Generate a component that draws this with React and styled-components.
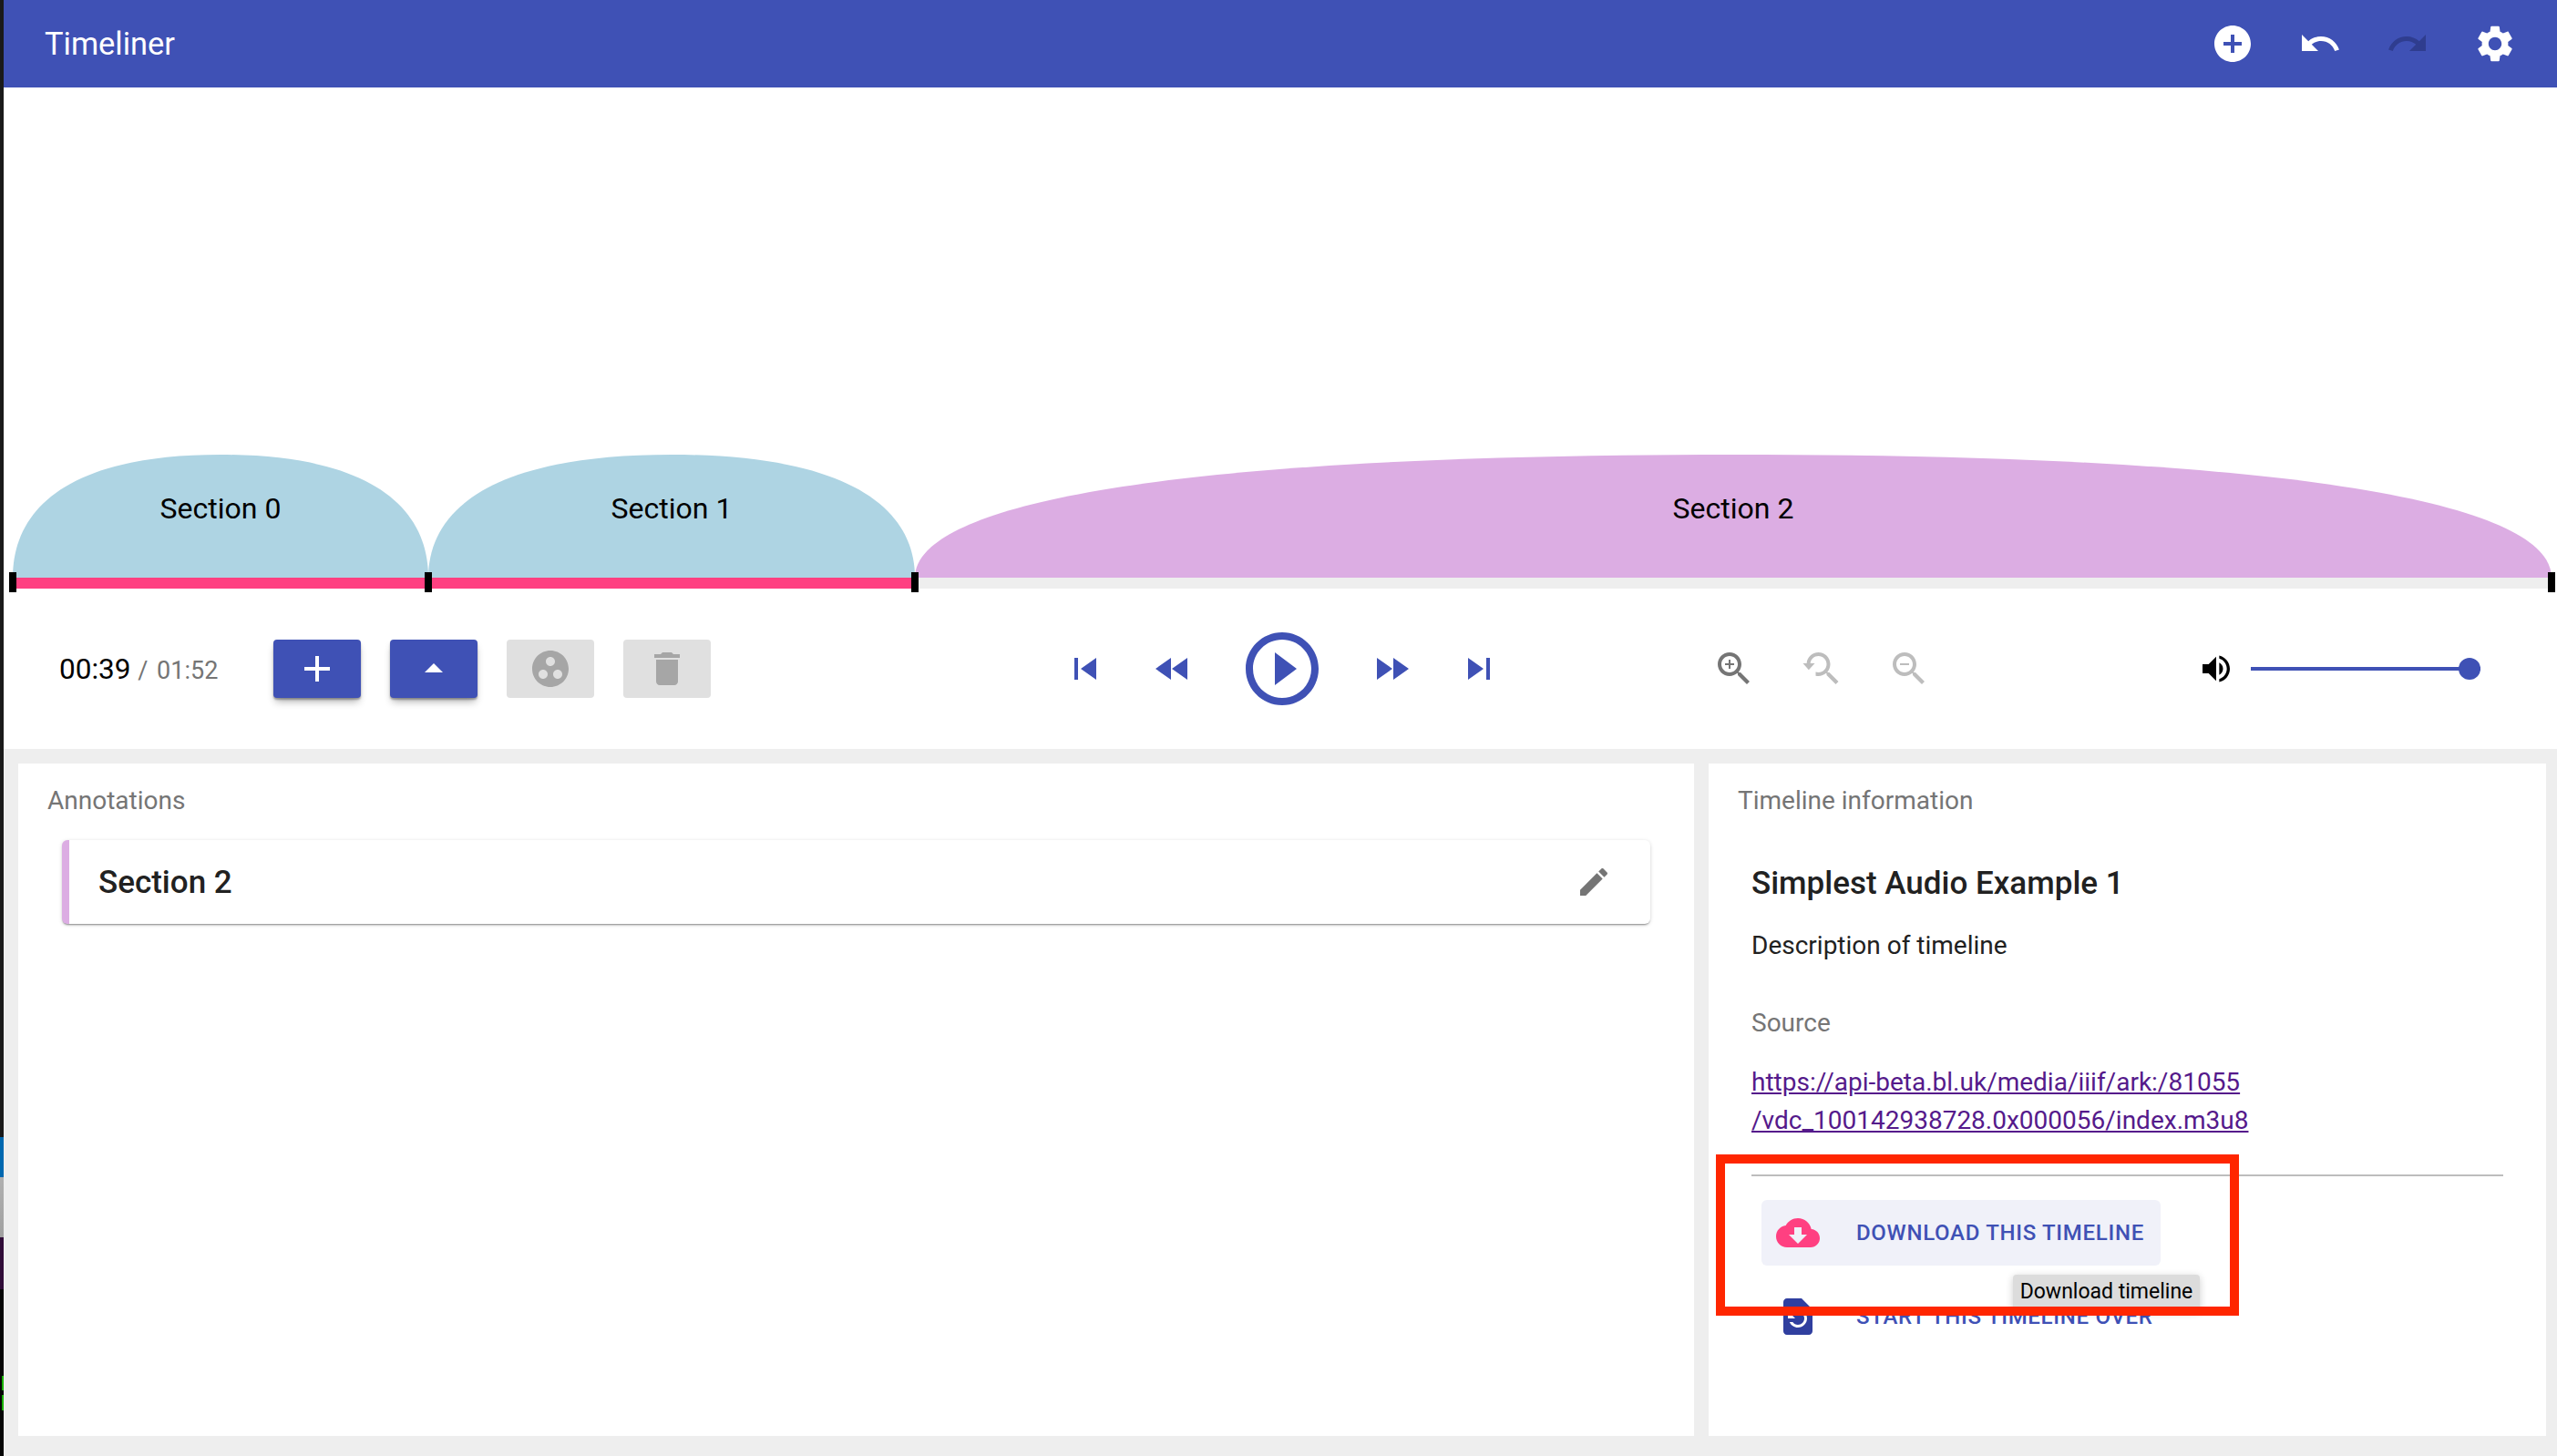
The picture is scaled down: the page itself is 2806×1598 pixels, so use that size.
import React from 'react';
import styled, { createGlobalStyle } from 'styled-components';

const P = {
  add: 'M12 2C6.48 2 2 6.48 2 12s4.48 10 10 10 10-4.48 10-10S17.52 2 12 2zm5 11h-4v4h-2v-4H7v-2h4V7h2v4h4v2z',
  undo: 'M12.5 8c-2.65 0-5.05.99-6.9 2.6L2 7v9h9l-3.62-3.62c1.39-1.16 3.16-1.88 5.12-1.88 3.54 0 6.55 2.31 7.6 5.5l2.37-.78C21.08 11.03 17.15 8 12.5 8z',
  redo: 'M18.4 10.6C16.55 8.99 14.15 8 11.5 8c-4.65 0-8.58 3.03-9.96 7.22L3.9 16c1.05-3.19 4.05-5.5 7.6-5.5 1.95 0 3.73.72 5.12 1.88L13 16h9V7l-3.6 3.6z',
  settings: 'M19.14 12.94c.04-.3.06-.61.06-.94 0-.32-.02-.64-.07-.94l2.03-1.58c.18-.14.23-.41.12-.61l-1.92-3.32c-.12-.22-.37-.29-.59-.22l-2.39.96c-.5-.38-1.03-.7-1.62-.94l-.36-2.54c-.04-.24-.24-.41-.48-.41h-3.84c-.24 0-.43.17-.47.41l-.36 2.54c-.59.24-1.13.57-1.62.94l-2.39-.96c-.22-.08-.47 0-.59.22L2.74 8.87c-.12.21-.08.47.12.61l2.03 1.58c-.05.3-.09.63-.09.94s.02.64.07.94l-2.03 1.58c-.18.14-.23.41-.12.61l1.92 3.32c.12.22.37.29.59.22l2.39-.96c.5.38 1.03.7 1.62.94l.36 2.54c.05.24.24.41.48.41h3.84c.24 0 .44-.17.47-.41l.36-2.54c.59-.24 1.13-.56 1.62-.94l2.39.96c.22.08.47 0 .59-.22l1.92-3.32c.12-.22.07-.47-.12-.61l-2.01-1.58zM12 15.6c-1.98 0-3.6-1.62-3.6-3.6s1.62-3.6 3.6-3.6 3.6 1.62 3.6 3.6-1.62 3.6-3.6 3.6z',
  plus: 'M19 13h-6v6h-2v-6H5v-2h6V5h2v6h6v2z',
  dropUp: 'M7 14l5-5 5 5z',
  group: 'M12 2C6.48 2 2 6.48 2 12s4.48 10 10 10 10-4.48 10-10S17.52 2 12 2zM8 17.5c-1.38 0-2.5-1.12-2.5-2.5s1.12-2.5 2.5-2.5 2.5 1.12 2.5 2.5-1.12 2.5-2.5 2.5zM9.5 8c0-1.38 1.12-2.5 2.5-2.5s2.5 1.12 2.5 2.5-1.12 2.5-2.5 2.5S9.5 9.38 9.5 8zm6.5 9.5c-1.38 0-2.5-1.12-2.5-2.5s1.12-2.5 2.5-2.5 2.5 1.12 2.5 2.5-1.12 2.5-2.5 2.5z',
  trash: 'M6 19c0 1.1.9 2 2 2h8c1.1 0 2-.9 2-2V7H6v12zM19 4h-3.5l-1-1h-5l-1 1H5v2h14V4z',
  skipPrev: 'M6 6h2v12H6zm3.5 6l8.5 6V6z',
  rewind: 'M11 18V6l-8.5 6 8.5 6zm.5-6l8.5 6V6l-8.5 6z',
  play: 'M10 16.5l6-4.5-6-4.5v9zM12 2C6.48 2 2 6.48 2 12s4.48 10 10 10 10-4.48 10-10S17.52 2 12 2zm0 18c-4.41 0-8-3.59-8-8s3.59-8 8-8 8 3.59 8 8-3.59 8-8 8z',
  forward: 'M4 18l8.5-6L4 6v12zm9-12v12l8.5-6L13 6z',
  skipNext: 'M6 18l8.5-6L6 6v12zM16 6v12h2V6h-2z',
  zoomIn: 'M15.5 14h-.79l-.28-.27C15.41 12.59 16 11.11 16 9.5 16 5.91 13.09 3 9.5 3S3 5.91 3 9.5 5.91 16 9.5 16c1.61 0 3.09-.59 4.23-1.57l.27.28v.79l5 4.99L20.49 19l-4.99-5zm-6 0C7.01 14 5 11.99 5 9.5S7.01 5 9.5 5 14 7.01 14 9.5 11.99 14 9.5 14zm2.5-4h-2v2H9v-2H7V9h2V7h1v2h2v1z',
  zoomOut: 'M15.5 14h-.79l-.28-.27C15.41 12.59 16 11.11 16 9.5 16 5.91 13.09 3 9.5 3S3 5.91 3 9.5 5.91 16 9.5 16c1.61 0 3.09-.59 4.23-1.57l.27.28v.79l5 4.99L20.49 19l-4.99-5zm-6 0C7.01 14 5 11.99 5 9.5S7.01 5 9.5 5 14 7.01 14 9.5 11.99 14 9.5 14zM7 9h5v1H7z',
  zoomReset: 'M15.5 14h-.79l-.28-.27C15.41 12.59 16 11.11 16 9.5 16 5.91 13.09 3 9.5 3 6.1 3 3.32 5.62 3.05 8.95h2.02C5.33 6.73 7.2 5 9.5 5 11.99 5 14 7.01 14 9.5S11.99 14 9.5 14c-.5 0-1-.08-1.5-.2v2.05c.5.1 1 .15 1.5.15 1.61 0 3.09-.59 4.23-1.57l.27.28v.79l5 4.99L20.49 19l-4.99-5zM7.5 9H1l3.2 3.6z',
  volume: 'M3 9v6h4l5 5V4L7 9H3zm13.5 3c0-1.77-1.02-3.29-2.5-4.03v8.05c1.48-.73 2.5-2.25 2.5-4.02zM14 3.23v2.06c2.89.86 5 3.54 5 6.71s-2.11 5.85-5 6.71v2.06c4.01-.91 7-4.49 7-8.77s-2.99-7.86-7-8.77z',
  edit: 'M3 17.25V21h3.75L17.81 9.94l-3.75-3.75L3 17.25zM20.71 7.04c.39-.39.39-1.02 0-1.41l-2.34-2.34c-.39-.39-1.02-.39-1.41 0l-1.83 1.83 3.75 3.75 1.83-1.83z',
  cloud: 'M19.35 10.04C18.67 6.59 15.64 4 12 4 9.11 4 6.6 5.64 5.35 8.04 2.34 8.36 0 10.91 0 14c0 3.31 2.69 6 6 6h13c2.76 0 5-2.24 5-5 0-2.64-2.05-4.78-4.65-4.96zM17 13l-5 5-5-5h3V9h4v4h3z',
  restore: 'M14 2H6c-1.1 0-1.99.9-1.99 2L4 20c0 1.1.89 2 1.99 2H18c1.1 0 2-.9 2-2V8l-6-6zm-2 16c-2.05 0-3.81-1.24-4.58-3h1.71c.63.9 1.68 1.5 2.87 1.5 1.93 0 3.5-1.57 3.5-3.5S13.93 9.5 12 9.5c-1.35 0-2.52.78-3.1 1.9l1.6 1.6h-4V9l1.3 1.3C8.69 8.92 10.23 8 12 8c2.76 0 5 2.24 5 5s-2.24 5-5 5z',
};

const Global = createGlobalStyle`
  html, body { margin: 0; padding: 0; background: #eeeeee; }
  body { font-family: Roboto, "Liberation Sans", sans-serif; overflow: hidden; }
  * { box-sizing: border-box; }
`;

const Svg = styled.svg`
  display: block;
  flex: none;
  width: ${(p) => p.$size}px;
  height: ${(p) => p.$size}px;
  fill: ${(p) => p.$color};
`;
const Icon = ({ d, size = 48, color = 'currentColor', shift = 0 }) => (
  <Svg viewBox="0 0 24 24" $size={size} $color={color}>
    <path d={d} transform={shift ? `translate(${shift} 0)` : undefined} />
  </Svg>
);

const Page = styled.div`
  display: flex;
  width: 2806px;
  height: 1598px;
`;
const WindowEdge = styled.div`
  flex: none;
  width: 4px;
  background:
    linear-gradient(
      to bottom,
      transparent 0, transparent 1510px,
      #18b000 1510px, #18b000 1526px,
      transparent 1526px, transparent 1531px,
      #18b000 1531px, #18b000 1548px,
      transparent 1548px
    ) right top / 2px 100% no-repeat,
    linear-gradient(
      to bottom,
      #1a1a1a 0, #1a1a1a 1248px,
      #0068b0 1248px, #0068b0 1292px,
      #b0b0b0 1292px, #a0a0a0 1358px,
      #300c38 1358px, #300c38 1415px,
      #050505 1415px
    );
`;
const Main = styled.div`
  flex: 1;
  min-width: 0;
  display: flex;
  flex-direction: column;
`;
const AppBar = styled.header`
  flex: none;
  height: 96px;
  background: #3f51b5;
  color: #fff;
  display: flex;
  align-items: center;
  padding: 0 20px 0 45px;
`;
const AppTitle = styled.h1`
  flex: 1;
  margin: 0;
  font-size: 34.4px;
  font-weight: 400;
`;
const BarButton = styled.div`
  width: 96px;
  height: 96px;
  display: flex;
  align-items: center;
  justify-content: center;
  color: ${(p) => (p.$off ? '#2f3d8f' : '#fff')};
`;
const Stage = styled.section`
  flex: none;
  background: #fff;
`;
const Timeline = styled.div`
  height: 550px;
  padding: 403px 2px 0 10px;
  display: flex;
  flex-direction: column;
`;
const Bubbles = styled.div`
  display: flex;
  height: 135px;
`;
const Bubble = styled.div`
  position: relative;
  width: ${(p) => p.$w}px;
  height: 135px;
  display: flex;
  align-items: center;
  justify-content: center;
  padding-bottom: 18px;
  font-size: 32px;
  color: #000;
`;
const BubbleShape = styled.svg`
  position: absolute;
  inset: 0;
  width: 100%;
  height: 100%;
  fill: ${(p) => p.$bg};
`;
const BubbleLabel = styled.span`
  position: relative;
`;
const Track = styled.div`
  position: relative;
  height: 12px;
  background: #eeeeee;
`;
const Played = styled.div`
  height: 12px;
  width: 990px;
  background: #ff4081;
`;
const Handle = styled.i`
  position: absolute;
  top: -6px;
  left: ${(p) => p.$x}px;
  width: 8px;
  height: 22px;
  background: #000;
`;
const Controls = styled.div`
  height: 176px;
  display: grid;
  grid-template-columns: 1139px 712px 557px 1fr;
  align-items: center;
`;
const LeftGroup = styled.div`
  display: flex;
  align-items: center;
  padding-left: 61px;
`;
const TimeText = styled.div`
  width: 235px;
  font-size: 31.5px;
  color: #000;
  white-space: nowrap;
`;
const TimeTotal = styled.span`
  font-size: 27px;
  word-spacing: 3px;
  color: #757575;
`;
const ActionButton = styled.div`
  width: 96px;
  height: 64px;
  margin-right: 32px;
  border-radius: 4px;
  display: flex;
  align-items: center;
  justify-content: center;
  background: ${(p) => (p.$off ? '#e0e0e0' : '#3f51b5')};
  color: ${(p) => (p.$off ? '#a6a6a6' : '#fff')};
  box-shadow: ${(p) => (p.$off ? 'none' : '0 2px 2px rgba(0,0,0,.3), 0 6px 8px -2px rgba(0,0,0,.3)')};
`;
const IconRow = styled.div`
  display: flex;
  align-items: center;
`;
const IconCell = styled.div`
  width: ${(p) => p.$w || 96}px;
  height: ${(p) => p.$w || 96}px;
  display: flex;
  align-items: center;
  justify-content: center;
  color: ${(p) => p.$color};
`;
const VolumeRow = styled.div`
  display: flex;
  align-items: center;
  gap: 18px;
`;
const Slider = styled.div`
  width: 252px;
  height: 4px;
  background: #3f51b5;
  position: relative;
`;
const Thumb = styled.i`
  position: absolute;
  right: 0;
  top: -10px;
  width: 24px;
  height: 24px;
  border-radius: 50%;
  background: #3f51b5;
`;
const Panels = styled.div`
  flex: 1;
  min-height: 0;
  display: flex;
  gap: 16px;
  padding: 16px 12px 22px 16px;
  background: #eeeeee;
`;
const Panel = styled.section`
  position: relative;
  background: #fff;
  width: ${(p) => p.$w}px;
  flex: none;
  overflow: hidden;
`;
const PanelTitle = styled.div`
  font-size: 28px;
  line-height: 40px;
  color: #757575;
  padding: 21px 0 0 32px;
`;
const AnnotationCard = styled.div`
  margin: 23px 48px 0;
  height: 92px;
  background: #fff;
  border-left: 8px solid #dcade3;
  border-radius: 6px;
  padding: 0 30px 0 32px;
  display: flex;
  align-items: center;
  justify-content: space-between;
  box-shadow: 0 2px 2px -1px rgba(0,0,0,.4), 0 1px 4px rgba(0,0,0,.16);
  color: #757575;
`;
const CardTitle = styled.div`
  font-size: 35px;
  font-weight: 500;
  color: #212121;
`;
const Info = styled.div`
  padding: 0 47px 0 47px;
`;
const InfoTitle = styled.div`
  margin-top: 47px;
  font-size: 35px;
  line-height: 48px;
  font-weight: 500;
  color: #212121;
`;
const InfoText = styled.div`
  margin-top: 24px;
  font-size: 28px;
  line-height: 40px;
  color: #212121;
`;
const InfoLabel = styled.div`
  margin-top: 45px;
  font-size: 28px;
  line-height: 40px;
  color: #757575;
`;
const SourceLink = styled.a`
  display: block;
  margin-top: 24px;
  font-size: 28px;
  line-height: 42px;
  color: #551a8b;
  text-decoration: underline;
`;
const Rule = styled.hr`
  margin: 38px 0 26px;
  border: 0;
  height: 2px;
  background: #bdbdbd;
`;
const ActionList = styled.div`
  margin-left: 11px;
  display: flex;
  flex-direction: column;
  align-items: flex-start;
  gap: 20px;
`;
const TextAction = styled.div`
  height: 72px;
  display: flex;
  align-items: center;
  padding: 0 18px 0 16px;
  gap: 40px;
  border-radius: 6px;
  background: ${(p) => (p.$hover ? '#f0f1f9' : 'transparent')};
  color: #3f51b5;
  font-size: 24px;
  font-weight: 500;
  letter-spacing: 0.7px;
  text-transform: uppercase;
`;
const Tooltip = styled.div`
  position: absolute;
  left: 334px;
  top: 561px;
  width: 205px;
  height: 40px;
  border-radius: 4px;
  background: #dcdcdc;
  color: #000;
  font-size: 23px;
  line-height: 38px;
  text-align: center;
  white-space: nowrap;
  box-shadow: 0 2px 8px rgba(0,0,0,.2);
`;
const Highlight = styled.div`
  position: absolute;
  left: 8px;
  top: 429px;
  width: 574px;
  height: 177px;
  border: 10px solid #ff2600;
`;

const Section = ({ w, bg, children }) => (
  <Bubble $w={w}>
    <BubbleShape viewBox="0 0 100 100" preserveAspectRatio="none" $bg={bg}>
      <path d="M0 100C0 44.4 13.2 0 50 0S100 44.4 100 100Z" />
    </BubbleShape>
    <BubbleLabel>{children}</BubbleLabel>
  </Bubble>
);

export default function App() {
  return (
    <Page>
      <Global />
      <WindowEdge />
      <Main>
        <AppBar>
          <AppTitle>Timeliner</AppTitle>
          <BarButton><Icon d={P.add} /></BarButton>
          <BarButton><Icon d={P.undo} /></BarButton>
          <BarButton $off><Icon d={P.redo} /></BarButton>
          <BarButton><Icon d={P.settings} /></BarButton>
        </AppBar>
        <Stage>
          <Timeline>
            <Bubbles>
              <Section w={456} bg="#aed4e3">Section 0</Section>
              <Section w={534} bg="#aed4e3">Section 1</Section>
              <Section w={1796} bg="#dcade3">Section 2</Section>
            </Bubbles>
            <Track>
              <Played />
              <Handle $x={-4} />
              <Handle $x={452} />
              <Handle $x={986} />
              <Handle $x={2782} />
            </Track>
          </Timeline>
          <Controls>
            <LeftGroup>
              <TimeText>00:39 <TimeTotal>/ 01:52</TimeTotal></TimeText>
              <ActionButton><Icon d={P.plus} /></ActionButton>
              <ActionButton><Icon d={P.dropUp} /></ActionButton>
              <ActionButton $off><Icon d={P.group} /></ActionButton>
              <ActionButton $off><Icon d={P.trash} /></ActionButton>
            </LeftGroup>
            <IconRow>
              <IconCell $color="#3f51b5"><Icon d={P.skipPrev} /></IconCell>
              <IconCell $color="#3f51b5"><Icon d={P.rewind} /></IconCell>
              <IconCell $w={144} $color="#3f51b5"><Icon d={P.play} size={96} /></IconCell>
              <IconCell $color="#3f51b5"><Icon d={P.forward} /></IconCell>
              <IconCell $color="#3f51b5"><Icon d={P.skipNext} /></IconCell>
            </IconRow>
            <IconRow>
              <IconCell $color="#757575"><Icon d={P.zoomIn} /></IconCell>
              <IconCell $color="#bdbdbd"><Icon d={P.zoomReset} shift={0.75} /></IconCell>
              <IconCell $color="#bdbdbd"><Icon d={P.zoomOut} /></IconCell>
            </IconRow>
            <VolumeRow>
              <Icon d={P.volume} size={40} color="#000" />
              <Slider><Thumb /></Slider>
            </VolumeRow>
          </Controls>
        </Stage>
        <Panels>
          <Panel $w={1839}>
            <PanelTitle>Annotations</PanelTitle>
            <AnnotationCard>
              <CardTitle>Section 2</CardTitle>
              <IconCell $w={64}><Icon d={P.edit} size={40} /></IconCell>
            </AnnotationCard>
          </Panel>
          <Panel $w={919}>
            <PanelTitle>Timeline information</PanelTitle>
            <Info>
              <InfoTitle>Simplest Audio Example 1</InfoTitle>
              <InfoText>Description of timeline</InfoText>
              <InfoLabel>Source</InfoLabel>
              <SourceLink>https://api-beta.bl.uk/media/iiif/ark:/81055<br />/vdc_100142938728.0x000056/index.m3u8</SourceLink>
              <Rule />
              <ActionList>
                <TextAction $hover><Icon d={P.cloud} color="#ff4081" />Download this timeline</TextAction>
                <TextAction><Icon d={P.restore} color="#303f9f" />Start this timeline over</TextAction>
              </ActionList>
            </Info>
            <Tooltip>Download timeline</Tooltip>
            <Highlight />
          </Panel>
        </Panels>
      </Main>
    </Page>
  );
}
